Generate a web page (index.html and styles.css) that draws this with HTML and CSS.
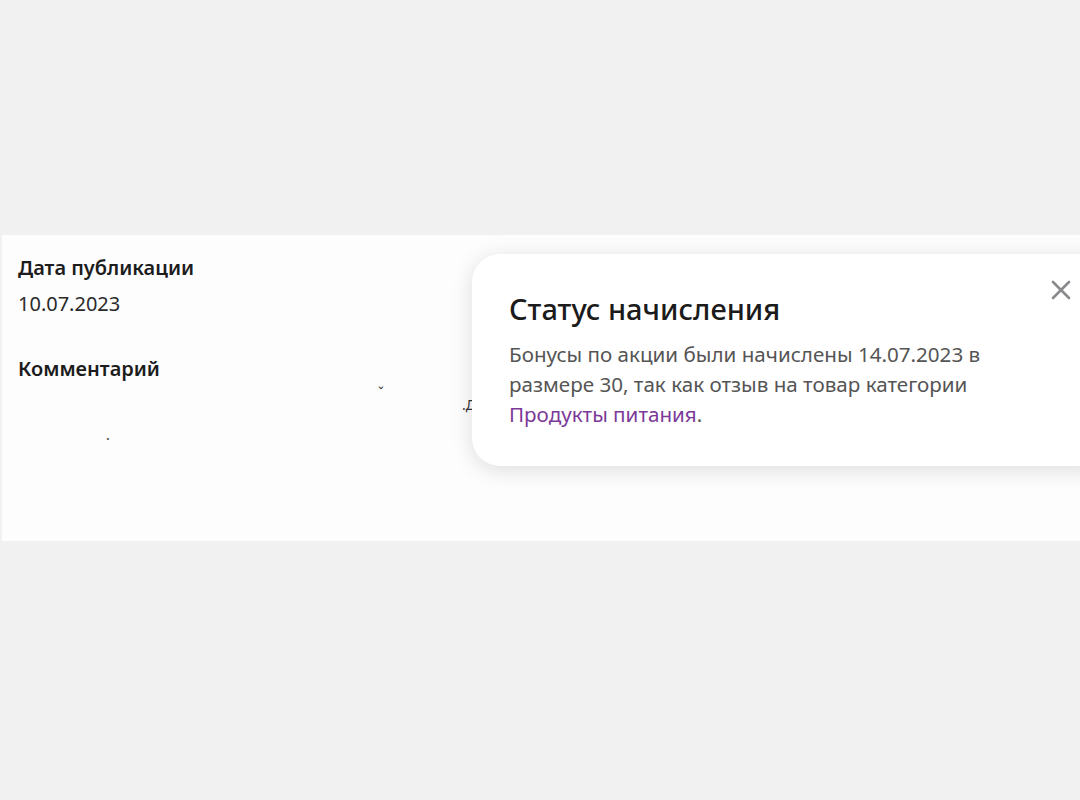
FILE: index.html
```html
<html>
   <head>
      <meta charset="utf-8">
      <link rel="stylesheet" href="styles.css">
   </head>
   <body>
      <div class="topSpace"></div>
      <div class="review">
         <div class="meta">
            <div class="label">Дата публикации</div>
            <div class="value">10.07.2023</div>
            <div class="label comment">Комментарий</div>
            <div class="commentText">
               <span class="mark m1">ˇ</span>
               <span class="mark m2">.Д</span>
               <span class="mark m3">.</span>
            </div>
         </div>
         <div class="statusCard">
            <button class="closeButton" type="button">
               <svg width="20" height="20" viewBox="0 0 20 20">
                  <path d="M2 2 L18 18 M18 2 L2 18" stroke="#8a8a8e" stroke-width="2.6" stroke-linecap="round" fill="none"/>
               </svg>
            </button>
            <div class="cardTitle">Статус начисления</div>
            <div class="cardText">
               Бонусы по акции были начислены 14.07.2023 в размере 30, так как отзыв на товар категории
               <a class="categoryLink" href="#">Продукты питания</a>.
            </div>
         </div>
      </div>
      <div class="bottomSpace"></div>
   </body>
</html>
```

FILE: styles.css
```css
body {
margin: 0;
background-color: #f1f1f1;
font-family: "Noto Sans", "Open Sans", sans-serif;
overflow: hidden;
}
.topSpace {
height: 235px;
}
.review {
position: relative;
height: 306px;
margin-left: 2px;
background-color: #fdfdfd;
}
.meta {
padding: 21px 0 0 16px;
}
.label {
font-size: 20px;
line-height: 24px;
font-weight: 600;
color: #1c1c1c;
}
.value {
margin-top: 12px;
font-size: 20px;
line-height: 24px;
color: #2a2a2a;
}
.comment {
margin-top: 41px;
}
.commentText {
position: relative;
height: 60px;
}
.mark {
position: absolute;
font-size: 14px;
color: #333;
}
.m1 { left: 360px; top: 2px; }
.m2 { left: 444px; top: 14px; }
.m3 { left: 88px; top: 44px; }
.statusCard {
position: absolute;
left: 470px;
top: 19px;
width: 640px;
height: 212px;
box-sizing: border-box;
padding: 38px 0 0 37px;
background-color: #ffffff;
border-radius: 28px;
box-shadow: 0 4px 22px rgba(0, 0, 0, 0.13);
}
.closeButton {
position: absolute;
top: 25px;
left: 578px;
width: 22px;
height: 22px;
padding: 0;
border: none;
background: none;
}
.cardTitle {
font-size: 29px;
line-height: 34px;
font-weight: 500;
color: #1b1b1b;
}
.cardText {
width: 500px;
margin-top: 13px;
font-size: 20.6px;
line-height: 30px;
color: #555555;
}
.categoryLink {
color: #7b3a98;
text-decoration: none;
}
```
